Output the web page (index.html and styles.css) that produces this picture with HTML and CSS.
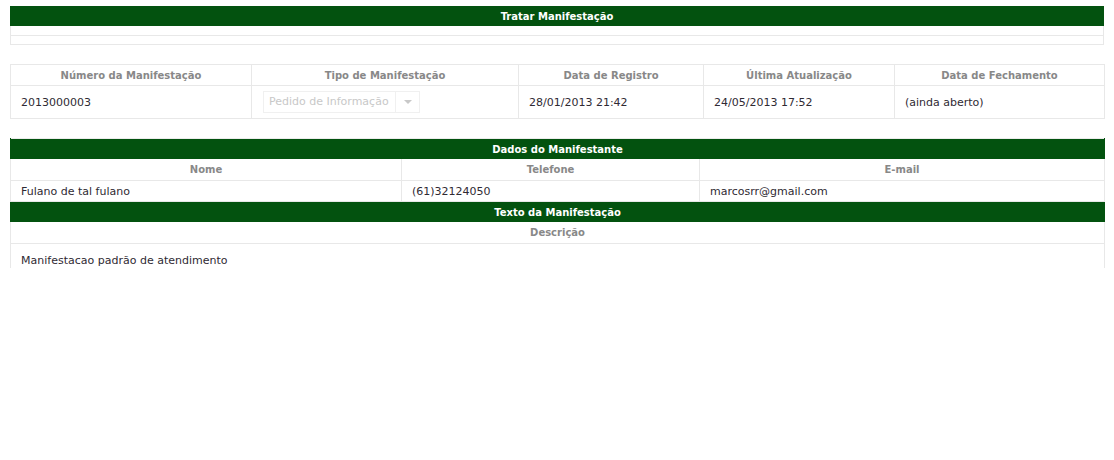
FILE: index.html
```html
<!DOCTYPE html>
<html lang="pt">
<head>
<meta charset="utf-8">
<title>Tratar Manifestação</title>
<link rel="stylesheet" href="styles.css">
</head>
<body>
<div class="page">
  <table class="grid top">
    <tr><th class="bar">Tratar Manifestação</th></tr>
    <tr><td class="blank r1"></td></tr>
    <tr><td class="blank r2"></td></tr>
  </table>

  <table class="grid info">
    <colgroup>
      <col class="c1"><col class="c2"><col class="c3"><col class="c4"><col class="c5">
    </colgroup>
    <tr class="head">
      <th>Número da Manifestação</th>
      <th>Tipo de Manifestação</th>
      <th>Data de Registro</th>
      <th>Última Atualização</th>
      <th>Data de Fechamento</th>
    </tr>
    <tr class="data tall">
      <td>2013000003</td>
      <td>
        <div class="select">
          <span class="select-text">Pedido de Informação</span>
          <span class="select-arrow"></span>
        </div>
      </td>
      <td>28/01/2013 21:42</td>
      <td>24/05/2013 17:52</td>
      <td>(ainda aberto)</td>
    </tr>
  </table>

  <table class="grid person">
    <colgroup>
      <col class="p1"><col class="p2"><col class="p3">
    </colgroup>
    <tr><th class="bar" colspan="3">Dados do Manifestante</th></tr>
    <tr class="head">
      <th>Nome</th>
      <th>Telefone</th>
      <th>E-mail</th>
    </tr>
    <tr class="data">
      <td>Fulano de tal fulano</td>
      <td>(61)32124050</td>
      <td>marcosrr@gmail.com</td>
    </tr>
    <tr><th class="bar" colspan="3">Texto da Manifestação</th></tr>
    <tr class="head">
      <th colspan="3">Descrição</th>
    </tr>
    <tr class="data text">
      <td colspan="3">Manifestacao padrão de atendimento</td>
    </tr>
  </table>
</div>
</body>
</html>
```

FILE: styles.css
```css
html, body {
  margin: 0;
  padding: 0;
  background: #fff;
}

body {
  font-family: "DejaVu Sans", Verdana, sans-serif;
  font-size: 11px;
  color: #2f2a33;
}

.page {
  height: 268px;
  overflow: hidden;
  padding: 6px 10px 0 10px;
  box-sizing: border-box;
  width: 1114px;
}

.grid {
  width: 1094px;
  border-collapse: collapse;
  table-layout: fixed;
  border-left: 1px solid #e6e6e6;
  border-right: 1px solid #e6e6e6;
}

.grid th,
.grid td {
  padding: 0 10px;
  border: 1px solid #e8e8e8;
  line-height: 13px;
}

.grid th.bar {
  background: #03520f;
  color: #fff;
  font-size: 10px;
  font-weight: bold;
  text-align: center;
  height: 20px;
  padding: 0;
  border: none;
  border-left: 1px solid #03520f;
  border-right: 1px solid #03520f;
}

.top .blank {
  padding: 0;
  border-top: none;
}

.top .r1 { height: 9px; }
.top .r2 { height: 8px; }

.info {
  margin-top: 19px;
}

.info .c1 { width: 241px; }
.info .c2 { width: 267px; }
.info .c3 { width: 185px; }
.info .c4 { width: 191px; }
.info .c5 { width: 210px; }

.head th {
  color: #888;
  font-size: 10px;
  font-weight: bold;
  text-align: center;
  height: 20px;
}

.data td {
  height: 20px;
  text-align: left;
  white-space: nowrap;
}

.data.tall td {
  height: 32px;
}

.person {
  margin-top: 19px;
  border-top: 1px solid #ececec;
}

.person .p1 { width: 391px; }
.person .p2 { width: 298px; }
.person .p3 { width: 405px; }

.person .head th {
  height: 21px;
  border-top: none;
}

.data.text td {
  height: 32px;
  vertical-align: middle;
}

.select {
  display: flex;
  width: 157px;
  height: 22px;
  border: 1px solid #f0f0f0;
  box-sizing: border-box;
  align-items: stretch;
  margin-left: 1px;
}

.select-text {
  flex: 1;
  overflow: hidden;
  white-space: nowrap;
  color: #c8c8c8;
  padding-left: 5px;
  line-height: 20px;
  border-right: 1px solid #f0f0f0;
}

.select-arrow {
  width: 23px;
  display: flex;
  align-items: center;
  justify-content: center;
}

.select-arrow::before {
  content: "";
  width: 0;
  height: 0;
  border-left: 4px solid transparent;
  border-right: 4px solid transparent;
  border-top: 4px solid #c8c8c8;
}
```
